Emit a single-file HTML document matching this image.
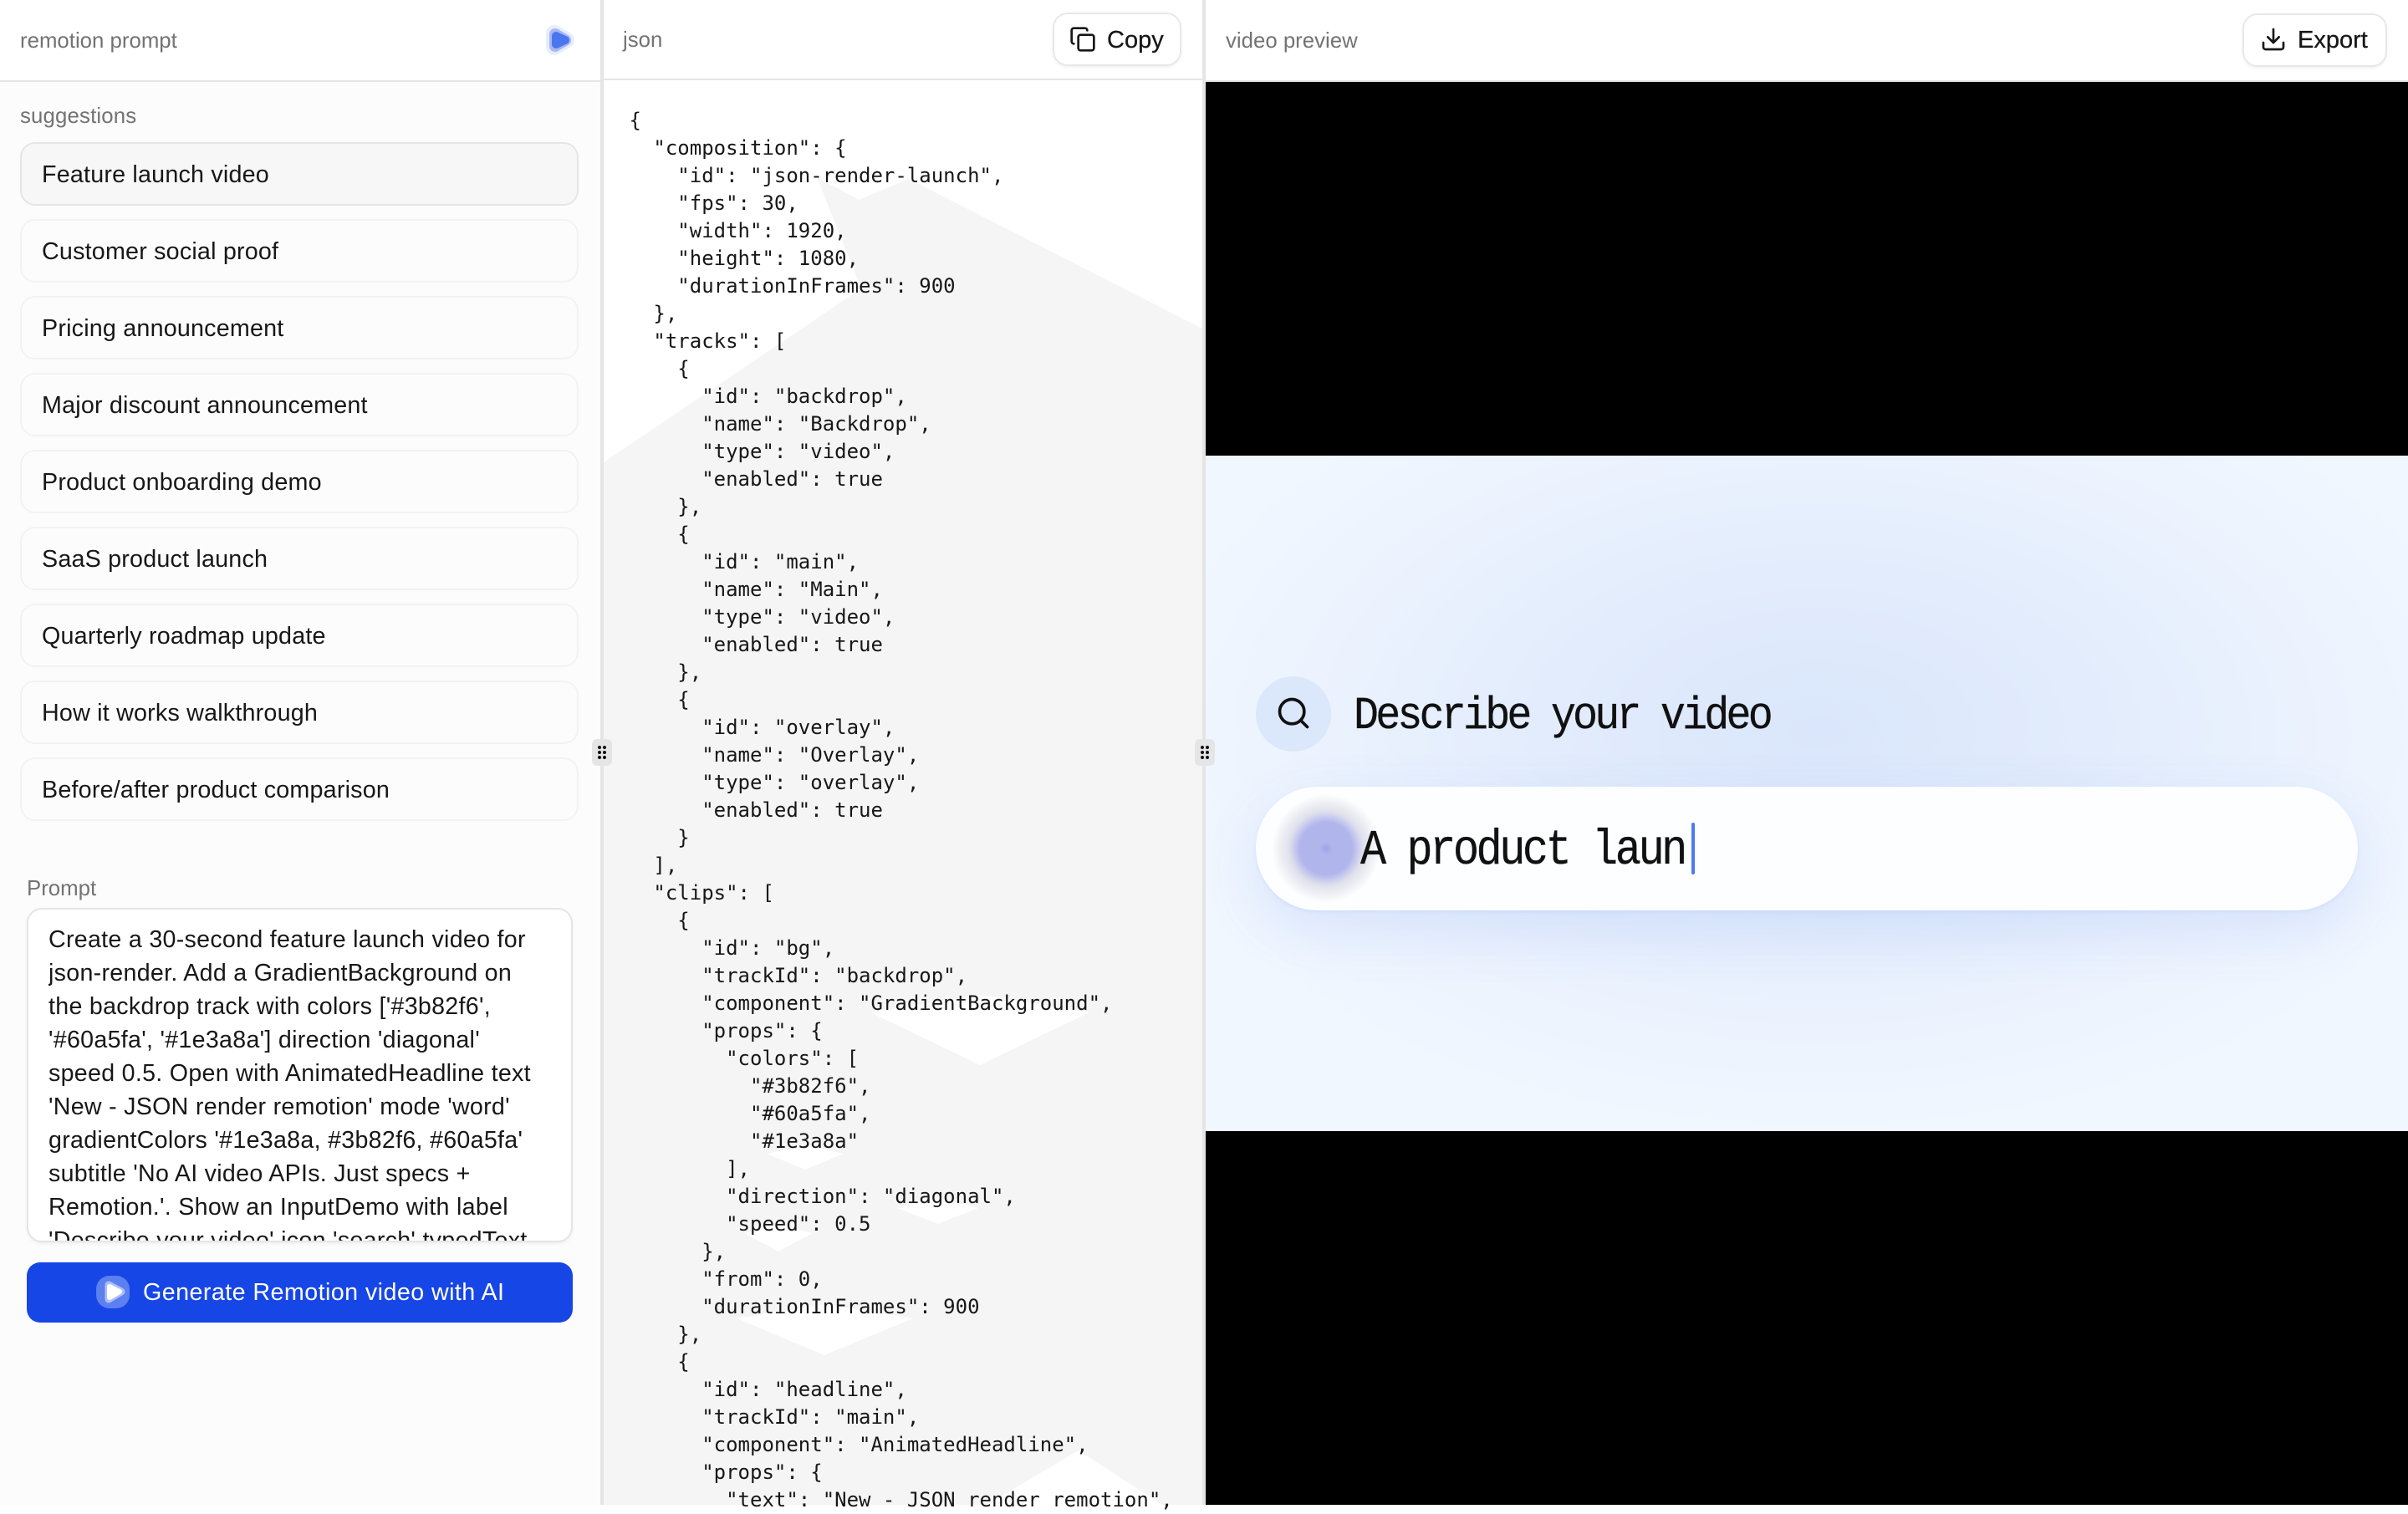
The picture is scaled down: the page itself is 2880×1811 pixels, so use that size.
<!DOCTYPE html>
<html><head><meta charset="utf-8"><title>remotion</title>
<style>
*{box-sizing:border-box;margin:0;padding:0}
html,body{width:2880px;height:1800px;overflow:hidden;background:#fff;font-family:"Liberation Sans",sans-serif;color:#171717}
.a{position:absolute}
.lab{position:absolute;font-size:25.8px;line-height:32px;color:#737373;white-space:nowrap}
.s{position:absolute;left:24px;width:668px;height:76px;border:2px solid #f3f3f3;border-radius:18px;background:#fcfcfc;font-size:28.7px;letter-spacing:.2px;line-height:74px;padding-left:24px;white-space:nowrap}
.s.on{background:#f7f7f7;border-color:#e5e5e5}
.btn{position:absolute;background:#fff;border:2px solid #e8e8e8;border-radius:18px;box-shadow:0 2px 3px rgba(0,0,0,.05)}
.bt{position:absolute;font-size:29px;line-height:36px;white-space:nowrap;-webkit-text-stroke:.3px #171717}
pre{position:absolute;left:752.5px;top:127.5px;font-family:"DejaVu Sans Mono","Liberation Mono",monospace;font-size:24px;line-height:33px;color:#171717;white-space:pre}
.h{position:absolute;width:24px;height:32px;top:884px;background:#e5e5e5;border-radius:6px}
.h i{position:absolute;width:4px;height:4px;background:#111;border-radius:50%}
</style></head><body>

<!-- left panel -->
<div class="a" style="left:0;top:98px;width:718px;height:1702px;background:#fcfcfc"></div>
<div class="a" style="left:0;top:96px;width:718px;height:2px;background:#e5e5e5"></div>
<div class="lab" style="left:24px;top:33px">remotion prompt</div>
<svg class="a" style="left:650px;top:28px" width="40" height="40" viewBox="0 0 40 40">
<path d="M13 12 L27 20 L13 28 Z" fill="#e6edfd" stroke="#e6edfd" stroke-width="20" stroke-linejoin="round"/>
<path d="M14 13 L26 20 L14 27 Z" fill="#a9b6f1" stroke="#a9b6f1" stroke-width="14" stroke-linejoin="round"/>
<path d="M15 15 L26 20 L15 25 Z" fill="#4a76f0" stroke="#4a76f0" stroke-width="10" stroke-linejoin="round"/>
</svg>
<div class="lab" style="left:24px;top:123px;letter-spacing:.15px">suggestions</div>
<div class="s on" style="top:170px">Feature launch video</div>
<div class="s" style="top:262px">Customer social proof</div>
<div class="s" style="top:354px">Pricing announcement</div>
<div class="s" style="top:446px">Major discount announcement</div>
<div class="s" style="top:538px">Product onboarding demo</div>
<div class="s" style="top:630px">SaaS product launch</div>
<div class="s" style="top:722px">Quarterly roadmap update</div>
<div class="s" style="top:814px">How it works walkthrough</div>
<div class="s" style="top:906px">Before/after product comparison</div>
<div class="lab" style="left:32px;top:1047px">Prompt</div>
<div class="a" style="left:32px;top:1086px;width:653px;height:400px;background:#fff;border:2px solid #e5e5e5;border-radius:18px;box-shadow:0 2px 4px rgba(0,0,0,.05);overflow:hidden">
<div class="a" style="left:24px;top:16px;font-size:28.6px;letter-spacing:.3px;line-height:40px;white-space:nowrap;color:#171717;height:380px;overflow:hidden">Create a 30-second feature launch video for<br>json-render. Add a GradientBackground on<br>the backdrop track with colors ['#3b82f6',<br>'#60a5fa', '#1e3a8a'] direction 'diagonal'<br>speed 0.5. Open with AnimatedHeadline text<br>'New - JSON render remotion' mode 'word'<br>gradientColors '#1e3a8a, #3b82f6, #60a5fa'<br>subtitle 'No AI video APIs. Just specs +<br>Remotion.'. Show an InputDemo with label<br>'Describe your video' icon 'search' typedText</div>
</div>
<div class="a" style="left:32px;top:1510px;width:653px;height:72px;background:#1746e6;border-radius:16px"></div>
<svg class="a" style="left:113px;top:1523px" width="44" height="44" viewBox="0 0 44 44">
<rect x="2" y="3" width="40" height="39" rx="16" fill="#5c80f0"/>
<path d="M17 14 L32 22 L17 31 Z" fill="#aebff8" stroke="#aebff8" stroke-width="9" stroke-linejoin="round"/>
<path d="M18 16 L30 22 L18 29 Z" fill="#fff" stroke="#fff" stroke-width="6" stroke-linejoin="round"/>
</svg>
<div class="a" style="left:171px;top:1528px;font-size:28.7px;letter-spacing:.42px;line-height:36px;color:#fff;white-space:nowrap">Generate Remotion video with AI</div>

<!-- middle panel -->
<div class="a" style="left:722px;top:0;width:716px;height:1800px;background:#fff;overflow:hidden">
<svg class="a" style="left:-722px;top:0" width="2880" height="1800" viewBox="0 0 2880 1800">
<polygon fill="#f5f5f5" points="722,553 1030,345 977,212 1027,239 1087,214 1440,394 1440,1800 722,1800"/>
<g fill="#fff">
<polygon points="1041,1211 1172,1190 1303,1211 1172,1274"/>
<polygon points="917,1380 963,1370 1009,1380 963,1399"/>
<polygon points="1073,1445 1122,1432 1170,1445 1122,1464"/>
<polygon points="890,1475 931,1465 972,1475 931,1497"/>
<polygon points="881,1577 986,1560 1092,1577 986,1621"/>
<polygon points="1180,1800 1290,1735 1390,1800"/>
</g>
</svg>
</div>
<div class="a" style="left:722px;top:0;width:716px;height:94px;background:#fff"></div>
<div class="a" style="left:722px;top:94px;width:716px;height:2px;background:#e5e5e5"></div>
<div class="lab" style="left:745px;top:32px">json</div>
<div class="btn" style="left:1259px;top:15px;width:154px;height:64px"></div>
<svg class="a" style="left:1279px;top:31px" width="32" height="32" viewBox="0 0 24 24" fill="none" stroke="#171717" stroke-width="2" stroke-linecap="round" stroke-linejoin="round"><rect x="8" y="8" width="14" height="14" rx="2"/><path d="M4 16c-1.1 0-2-.9-2-2V4c0-1.1.9-2 2-2h10c1.1 0 2 .9 2 2"/></svg>
<div class="bt" style="left:1324px;top:30px">Copy</div>
<pre>{
  "composition": {
    "id": "json-render-launch",
    "fps": 30,
    "width": 1920,
    "height": 1080,
    "durationInFrames": 900
  },
  "tracks": [
    {
      "id": "backdrop",
      "name": "Backdrop",
      "type": "video",
      "enabled": true
    },
    {
      "id": "main",
      "name": "Main",
      "type": "video",
      "enabled": true
    },
    {
      "id": "overlay",
      "name": "Overlay",
      "type": "overlay",
      "enabled": true
    }
  ],
  "clips": [
    {
      "id": "bg",
      "trackId": "backdrop",
      "component": "GradientBackground",
      "props": {
        "colors": [
          "#3b82f6",
          "#60a5fa",
          "#1e3a8a"
        ],
        "direction": "diagonal",
        "speed": 0.5
      },
      "from": 0,
      "durationInFrames": 900
    },
    {
      "id": "headline",
      "trackId": "main",
      "component": "AnimatedHeadline",
      "props": {
        "text": "New - JSON render remotion",</pre>

<!-- right panel -->
<div class="a" style="left:1442px;top:0;width:1438px;height:96px;background:#fff"></div>
<div class="a" style="left:1442px;top:96px;width:1438px;height:2px;background:#e5e5e5"></div>
<div class="lab" style="left:1466px;top:33px">video preview</div>
<div class="btn" style="left:2682px;top:16px;width:173px;height:64px"></div>
<svg class="a" style="left:2703px;top:31px" width="32" height="32" viewBox="0 0 24 24" fill="none" stroke="#171717" stroke-width="2" stroke-linecap="round" stroke-linejoin="round"><path d="M21 15v4a2 2 0 0 1-2 2H5a2 2 0 0 1-2-2v-4"/><polyline points="7 10 12 15 17 10"/><line x1="12" y1="15" x2="12" y2="3"/></svg>
<div class="bt" style="left:2748px;top:30px">Export</div>
<div class="a" style="left:1442px;top:98px;width:1438px;height:1702px;background:#000"></div>
<div class="a" style="left:1442px;top:545px;width:1438px;height:808px;overflow:hidden;background:radial-gradient(ellipse 820px 480px at 733px 331px,#dae6fb 0%,#e2ecfc 40%,#ecf3fe 75%,#f1f7ff 100%)">
<div class="a" style="left:60px;top:264px;width:90px;height:90px;border-radius:50%;background:#dbe7fb"></div>
<svg class="a" style="left:83px;top:286px" width="44" height="44" viewBox="0 0 24 24" fill="none" stroke="#111" stroke-width="2" stroke-linecap="round" stroke-linejoin="round"><circle cx="11" cy="11" r="8"/><line x1="21" y1="21" x2="16.65" y2="16.65"/></svg>
<div class="a" style="left:177px;top:285px;font-family:'Liberation Mono',monospace;font-size:50px;letter-spacing:-3.8px;line-height:56px;white-space:nowrap;color:#111;-webkit-text-stroke:.3px #111;transform:scaleY(1.1);transform-origin:0 50%">Describe your video</div>
<div class="a" style="left:60px;top:396px;width:1318px;height:148px;border-radius:74px;background:#fdfeff;box-shadow:0 24px 70px rgba(59,110,230,.12),0 2px 4px rgba(59,110,230,.08);overflow:hidden"></div>
<div class="a" style="left:79px;top:405px;width:130px;height:130px;border-radius:50%;background:radial-gradient(circle closest-side,#9aa6ea 0%,#b0b5ec 12%,#b0b5ec 48%,#c8caee 58%,#dfe0ec 68%,#eff0f4 85%,rgba(250,250,253,0) 100%)"></div>
<div class="a" style="left:185px;top:444px;font-family:'Liberation Mono',monospace;font-size:52px;letter-spacing:-3.5px;line-height:58px;white-space:nowrap;color:#111;-webkit-text-stroke:.3px #111;transform:scaleY(1.15);transform-origin:0 50%">A product laun</div>
<div class="a" style="left:581px;top:439px;width:4px;height:62px;background:#4f7bee;border-radius:2px"></div>
</div>

<!-- dividers -->
<div class="a" style="left:718px;top:0;width:4px;height:1800px;background:#e5e5e5"></div>
<div class="a" style="left:1438px;top:0;width:4px;height:1800px;background:#e5e5e5"></div>
<div class="h" style="left:708px"><i style="left:7px;top:8px"></i><i style="left:13px;top:8px"></i><i style="left:7px;top:14px"></i><i style="left:13px;top:14px"></i><i style="left:7px;top:20px"></i><i style="left:13px;top:20px"></i></div>
<div class="h" style="left:1429px"><i style="left:7px;top:8px"></i><i style="left:13px;top:8px"></i><i style="left:7px;top:14px"></i><i style="left:13px;top:14px"></i><i style="left:7px;top:20px"></i><i style="left:13px;top:20px"></i></div>
</body></html>
